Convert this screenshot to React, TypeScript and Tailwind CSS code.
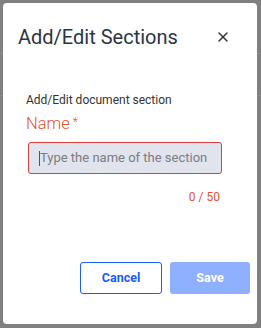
import { X } from 'lucide-react';

export default function App() {
  return (
    <div
      className="relative h-[328px] w-[261px] overflow-hidden bg-[#808080]"
      style={{ fontFamily: 'Roboto, "Liberation Sans", sans-serif' }}
    >
      {/* Page behind the overlay */}
      <div className="flex flex-col">
        <div className="h-[54px] border-b border-[#8d8d8d]" />
        <div className="h-[42px] border-b border-[#8d8d8d]" />
      </div>

      {/* Dialog */}
      <div className="absolute left-[3px] top-[3px] flex h-[321px] w-[254px] flex-col rounded-[4px] bg-white">
        <div className="flex items-center justify-between pl-[15px] pr-[26px] pt-[22px]">
          <h2 className="text-[20px] leading-[24px] text-[#2b3544]">Add/Edit Sections</h2>
          <X className="h-[16px] w-[16px] text-[#2b3544]" strokeWidth={2.2} />
        </div>

        <div className="flex flex-col px-[23px] pt-[44px]">
          <p className="text-[12px] leading-[14px] text-[#333]">Add/Edit document section</p>
          <label className="mt-[8px] flex items-start text-[16.5px] font-light leading-[18px] text-[#e5542f]">
            Name<span className="ml-[3px] text-[12px] leading-[14px]">*</span>
          </label>
          <div className="ml-[2px] mt-[9px] flex h-[32px] w-[194px] items-center rounded-[3px] border border-[#e03a3a] bg-[#e1e4ec] pl-[10px]">
            <span className="h-[15px] w-px bg-[#555]" />
            <span className="text-[13px] text-[#7a7d84]">Type the name of the section</span>
          </div>
          <div className="mt-[16px] pr-[14px] text-right text-[12px] leading-[14px] text-[#e5502f]">0 / 50</div>
        </div>

        <div className="mt-auto flex justify-end gap-[8px] pb-[30px] pr-[7px]">
          <button className="h-[32px] w-[82px] rounded-[3px] border border-[#1a5cff] bg-white text-[12.5px] font-bold text-[#1a5cff]">
            Cancel
          </button>
          <button className="h-[32px] w-[80px] rounded-[3px] bg-[#8fb0ff] text-[12.5px] font-bold text-white">
            Save
          </button>
        </div>
      </div>
    </div>
  );
}
